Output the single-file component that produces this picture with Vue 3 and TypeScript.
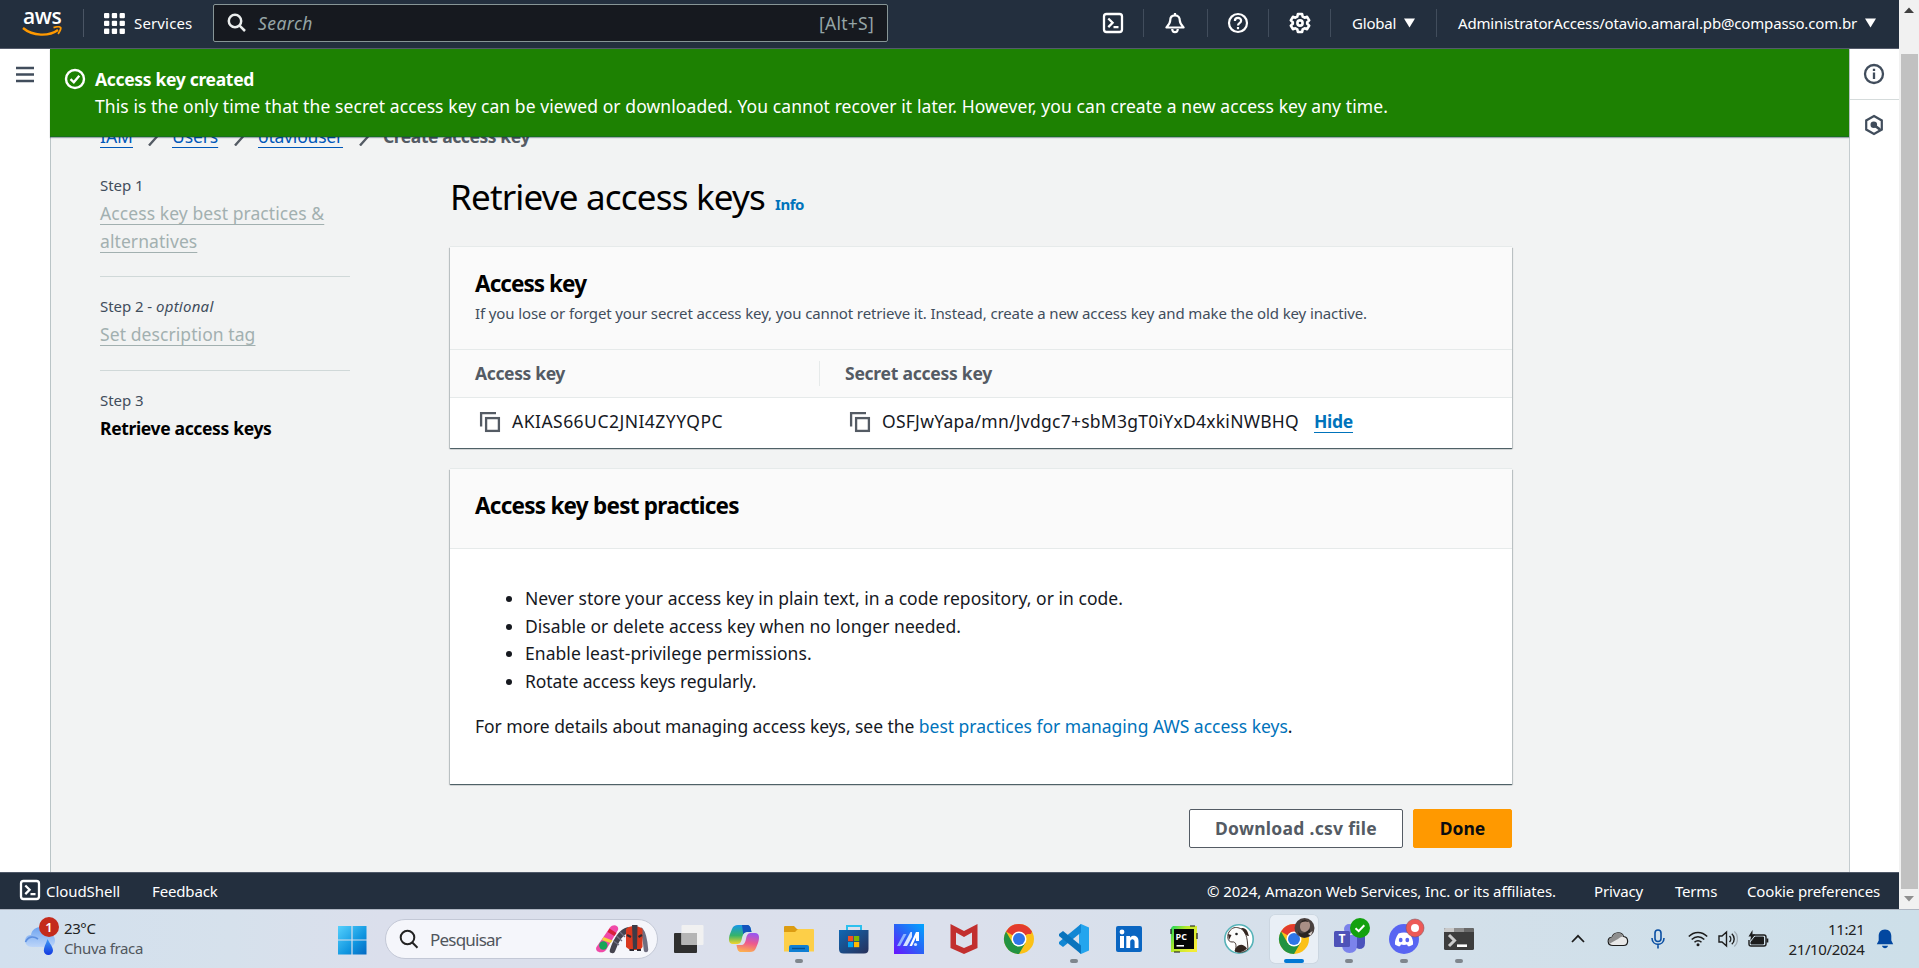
<script setup lang="ts">
interface Step {
  label: string
  optional?: boolean
  title: string
  current?: boolean
}

interface TaskApp {
  name: string
  running?: boolean
  active?: boolean
}

const steps: Step[] = [
  { label: 'Step 1', title: 'Access key best practices & alternatives' },
  { label: 'Step 2', optional: true, title: 'Set description tag' },
  { label: 'Step 3', title: 'Retrieve access keys', current: true },
]

const practices: string[] = [
  'Never store your access key in plain text, in a code repository, or in code.',
  'Disable or delete access key when no longer needed.',
  'Enable least-privilege permissions.',
  'Rotate access keys regularly.',
]

const apps: TaskApp[] = [
  { name: 'taskview' },
  { name: 'copilot' },
  { name: 'explorer', running: true },
  { name: 'store' },
  { name: 'myasus' },
  { name: 'mcafee' },
  { name: 'chrome' },
  { name: 'vscode', running: true },
  { name: 'linkedin' },
  { name: 'pycharm' },
  { name: 'dbeaver' },
  { name: 'chrome-profile', running: true, active: true },
  { name: 'teams', running: true },
  { name: 'discord', running: true },
  { name: 'terminal', running: true },
]
</script>

<template>
  <div class="screen">
    <div class="browser">
      <div class="page">
        <header class="topbar">
          <div class="aws">
            <span class="aws-word">aws</span>
            <svg width="42" height="11" viewBox="0 0 42 11">
              <path d="M1 2 C11 10.5 27 10.5 36 4" fill="none" stroke="#f90" stroke-width="2.4" />
              <path d="M31.500 1.700 C35 0.600 38 0.800 38.600 1.600 C39.200 2.500 38 5.600 36 7.800" fill="none" stroke="#f90" stroke-width="1.800" />
            </svg>
          </div>
          <span class="bar first"></span>
          <svg class="grid-icon" width="21" height="21" viewBox="0 0 21 21" fill="#fff">
            <template v-for="r in 3" :key="r">
              <rect v-for="c in 3" :key="c" :x="(c - 1) * 7.8" :y="(r - 1) * 7.8" width="5.3" height="5.3" rx="1" />
            </template>
          </svg>
          <span class="services">Services</span>
          <div class="search">
            <svg width="20" height="20" viewBox="0 0 20 20" fill="none" stroke="#eaeded" stroke-width="2.5">
              <circle cx="8" cy="8" r="6.2" />
              <path d="M12.6 12.6 L18 18" />
            </svg>
            <span class="placeholder">Search</span>
            <span class="shortcut">[Alt+S]</span>
          </div>
          <div class="cell shell">
            <svg width="22" height="22" viewBox="0 0 22 22" fill="none" stroke="#fff" stroke-width="2.3">
              <rect x="2" y="2" width="18" height="18" rx="2.5" />
              <path d="M6.3 6.5 L10.6 10.8 L6.3 15.1 M11.5 15.2 H16.5" />
            </svg>
          </div>
          <div class="cell bell">
            <svg width="22" height="22" viewBox="0 0 22 22" fill="none" stroke="#fff" stroke-width="2.2" stroke-linejoin="round">
              <path d="M11 3.3 C7.6 3.3 6.2 5.8 6.2 8.6 C6.2 11.5 4.6 13 2.4 15.5 H19.6 C17.4 13 15.8 11.5 15.8 8.6 C15.8 5.8 14.4 3.3 11 3.3 Z M11 1 V4" />
              <path d="M8.2 17 C8.4 21.3 13.6 21.3 13.8 17" />
            </svg>
          </div>
          <div class="cell help">
            <svg width="22" height="22" viewBox="0 0 22 22" fill="none" stroke="#fff" stroke-width="2.2">
              <circle cx="11" cy="11" r="9" />
              <path d="M7.9 8.9 C7.9 4.9 14.1 5 14.1 8.7 C14.1 11.2 11 11 11 13.4" />
              <path d="M11 15 V17.2" />
            </svg>
          </div>
          <div class="cell gear">
            <svg width="22" height="22" viewBox="0 0 22 22" fill="none" stroke="#fff" stroke-width="2.6" stroke-linejoin="round">
              <path d="M8.9 2 H13.1 L13.7 4.7 L15.6 5.7 L18.1 4.8 L20.2 8.4 L18.2 10.2 V11.8 L20.2 13.6 L18.1 17.2 L15.6 16.3 L13.7 17.3 L13.1 20 H8.9 L8.3 17.3 L6.4 16.3 L3.9 17.2 L1.8 13.6 L3.8 11.8 V10.2 L1.8 8.4 L3.9 4.8 L6.4 5.7 L8.3 4.7 Z" />
              <circle cx="11" cy="11" r="2.6" />
            </svg>
          </div>
          <div class="cell region">
            <span>Global</span>
            <svg width="11" height="10" viewBox="0 0 11 10"><path d="M0 0.5 H11 L5.5 9.5 Z" fill="#fff" /></svg>
          </div>
          <div class="cell account">
            <span>AdministratorAccess/otavio.amaral.pb@compasso.com.br</span>
            <svg width="11" height="10" viewBox="0 0 11 10"><path d="M0 0.5 H11 L5.5 9.5 Z" fill="#fff" /></svg>
          </div>
        </header>

        <div class="middle">
          <aside class="left-rail">
            <svg width="18" height="17" viewBox="0 0 18 17" stroke="#414d5c" stroke-width="2.4">
              <path d="M0 2 H18 M0 8.5 H18 M0 15 H18" />
            </svg>
          </aside>

          <main class="content">
            <section class="flash">
              <svg width="22" height="22" viewBox="0 0 22 22" fill="none" stroke="#fff" stroke-width="2.4">
                <circle cx="11" cy="11" r="9" />
                <path d="M6.5 11.2 L9.8 14.3 L15.3 7.8" />
              </svg>
              <div>
                <div class="flash-title">Access key created</div>
                <div class="flash-text">This is the only time that the secret access key can be viewed or downloaded. You cannot recover it later. However, you can create a new access key any time.</div>
              </div>
            </section>

            <nav class="crumbs">
              <a class="c-iam">IAM</a>
              <svg width="11" height="20" viewBox="0 0 11 20"><path d="M1 0.500 L9.500 10 L1 19.500" /></svg>
              <a class="c-users">Users</a>
              <svg width="11" height="20" viewBox="0 0 11 20"><path d="M1 0.500 L9.500 10 L1 19.500" /></svg>
              <a class="c-user">otaviouser</a>
              <svg width="11" height="20" viewBox="0 0 11 20"><path d="M1 0.500 L9.500 10 L1 19.500" /></svg>
              <b>Create access key</b>
            </nav>

            <div class="columns">
              <ol class="steps">
                <li v-for="s in steps" :key="s.label">
                  <div class="step-label">{{ s.label }}<template v-if="s.optional"> - <i>optional</i></template></div>
                  <div class="step-title"><b v-if="s.current">{{ s.title }}</b><a v-else>{{ s.title }}</a></div>
                </li>
              </ol>

              <div class="panel">
                <div class="heading">
                  <h1>Retrieve access keys</h1>
                  <a class="info">Info</a>
                </div>

                <section class="card keys">
                  <div class="card-head">
                    <h2 class="h-key">Access key</h2>
                    <p>If you lose or forget your secret access key, you cannot retrieve it. Instead, create a new access key and make the old key inactive.</p>
                  </div>
                  <div class="row head-row">
                    <div class="col-a"><span>Access key</span></div>
                    <div class="col-b">Secret access key</div>
                  </div>
                  <div class="row">
                    <div class="col-a">
                      <svg width="22" height="22" viewBox="0 0 22 22" fill="none" stroke="#545b64" stroke-width="2.3">
                        <path d="M2.1 15.5 V2.1 H17" /><rect x="7.1" y="7.1" width="12.8" height="12.8" />
                      </svg>
                      <span class="key-id">AKIAS66UC2JNI4ZYYQPC</span>
                    </div>
                    <div class="col-b">
                      <svg width="22" height="22" viewBox="0 0 22 22" fill="none" stroke="#545b64" stroke-width="2.3">
                        <path d="M2.1 15.5 V2.1 H17" /><rect x="7.1" y="7.1" width="12.8" height="12.8" />
                      </svg>
                      <span class="key-secret">OSFJwYapa/mn/Jvdgc7+sbM3gT0iYxD4xkiNWBHQ</span>
                      <a class="hide">Hide</a>
                    </div>
                  </div>
                </section>

                <section class="card best">
                  <div class="card-head"><h2>Access key best practices</h2></div>
                  <ul>
                    <li v-for="p in practices" :key="p">{{ p }}</li>
                  </ul>
                  <p class="more">For more details about managing access keys, see the <a>best practices for managing AWS access keys</a>.</p>
                </section>

                <div class="actions">
                  <button class="btn download">Download .csv file</button>
                  <button class="btn done">Done</button>
                </div>
              </div>
            </div>
          </main>

          <aside class="right-rail">
            <div class="tool">
              <svg width="22" height="22" viewBox="0 0 22 22" fill="none" stroke="#414d5c" stroke-width="2.3">
                <circle cx="11" cy="11" r="9" />
                <path d="M11 9.5 V16 M11 5.8 V8" />
              </svg>
            </div>
            <div class="tool">
              <svg width="22" height="22" viewBox="0 0 22 22" fill="none" stroke="#414d5c" stroke-width="2.2">
                <path d="M11 2 L18.8 6.5 V15.5 L11 20 L3.2 15.5 V6.5 Z" />
                <circle cx="10.8" cy="10.8" r="2.2" fill="#414d5c" />
                <path d="M11 11 L17 15.500" stroke-width="2.800" />
              </svg>
            </div>
          </aside>
        </div>

        <footer class="bottombar">
          <svg width="22" height="22" viewBox="0 0 22 22" fill="none" stroke="#fff" stroke-width="2.3">
            <rect x="2" y="2" width="18" height="18" rx="2.5" />
            <path d="M6.3 6.5 L10.6 10.8 L6.3 15.1 M11.5 15.2 H16.5" />
          </svg>
          <span class="f-shell">CloudShell</span>
          <span class="f-feedback">Feedback</span>
          <span class="f-copy">© 2024, Amazon Web Services, Inc. or its affiliates.</span>
          <span class="f-privacy">Privacy</span>
          <span class="f-terms">Terms</span>
          <span class="f-cookie">Cookie preferences</span>
        </footer>
      </div>

      <div class="scrollbar">
        <svg width="10" height="6" viewBox="0 0 10 6"><path d="M0 6 L5 0.5 L10 6 Z" fill="#404040" /></svg>
        <div class="thumb"></div>
        <svg width="10" height="6" viewBox="0 0 10 6"><path d="M0 0 L5 5.5 L10 0 Z" fill="#8f8f8f" /></svg>
      </div>
    </div>

    <div class="taskbar">
      <div class="weather">
        <svg width="38" height="42" viewBox="0 0 38 42">
          <defs>
            <linearGradient id="cloud" x1="0" y1="0" x2="0" y2="1">
              <stop offset="0" stop-color="#6fa4f0" /><stop offset="1" stop-color="#bcd5f9" />
            </linearGradient>
            <linearGradient id="drop" x1="0" y1="0" x2="0" y2="1">
              <stop offset="0" stop-color="#3f9bf5" /><stop offset="1" stop-color="#1238e0" />
            </linearGradient>
          </defs>
          <path d="M8 31 C-1 31 -1 19 7 19 C8 9 24 8 25 18 C33 18 33 31 25 31 Z" fill="url(#cloud)" />
          <path d="M1.5 26 C4 20 10 20 14 23" fill="none" stroke="#5d8fe0" stroke-width="1.6" />
          <path d="M23.5 23 C26 28 29 31 29 34.5 A4.6 4.6 0 0 1 19.8 34.5 C19.8 31 22 28 23.5 23 Z" fill="url(#drop)" />
          <circle cx="25" cy="11" r="10" fill="#c42b1c" />
          <text x="25" y="15.6" text-anchor="middle" class="badge-num">1</text>
        </svg>
        <div class="weather-text">
          <div class="temp">23°C</div>
          <div class="cond">Chuva fraca</div>
        </div>
      </div>

      <div class="start">
        <svg width="30" height="30" viewBox="0 0 30 30">
          <defs>
            <linearGradient id="win" x1="0" y1="0" x2="1" y2="1">
              <stop offset="0" stop-color="#55d0fd" /><stop offset="0.6" stop-color="#1096e0" /><stop offset="1" stop-color="#0469c2" />
            </linearGradient>
          </defs>
          <path d="M1 1 H14.4 V14.4 H1 Z M15.6 1 H29.500 V14.4 H15.6 Z M1 15.6 H14.4 V29.500 H1 Z M15.6 15.6 H29.500 V29.500 H15.6 Z" fill="url(#win)" />
        </svg>
      </div>

      <div class="task-search">
        <svg class="lens" width="20" height="20" viewBox="0 0 20 20" fill="none" stroke="#222" stroke-width="2">
          <circle cx="8.5" cy="8.5" r="6.8" />
          <path d="M13.3 13.5 L18.5 18.7" />
        </svg>
        <span>Pesquisar</span>
        <svg class="promo" width="54" height="32" viewBox="0 0 54 32">
          <path d="M1.500 24 L15 4.500 C18 0.500 24.500 2.500 23 7 L11 27 C8 31.500 -1 29 1.500 24 Z" fill="#f04aa8" />
          <path d="M14.500 5.500 L21.500 10 L19.400 13 L12.500 9 Z" fill="#d8213b" />
          <path d="M8.500 14 L17.500 17.500 L15.500 20 L7 17 Z" fill="#f7d33c" />
          <circle cx="8.300" cy="22.500" r="4.200" fill="#18a558" />
          <path d="M33 7 C26 9 21 17 17.500 27.500" fill="none" stroke="#45444f" stroke-width="5.500" stroke-linecap="round" />
          <path d="M25 9 L30 14 M21.500 13 L27 18 M18.500 18 L24 22" stroke="#6f6e80" stroke-width="1.400" />
          <path d="M46 7 C49.500 11 50.500 20 51 27" fill="none" stroke="#6f6e80" stroke-width="4.500" stroke-linecap="round" />
          <path d="M31 6 C35 2 43 2 47.500 6 L47.500 24 L45 27 H35 L31 24 Z" fill="#d9391f" />
          <path d="M37 2 H42.5 L42 26 H38 Z" fill="#3c3b47" />
          <path d="M32 12 L36 14 M43.5 14 L47 12 M34.500 27 H39 M42 27 H46" stroke="#2b2a33" stroke-width="2.200" />
        </svg>
      </div>

      <div class="apps">
        <div v-for="a in apps" :key="a.name" class="app" :class="{ active: a.active }">
          <svg v-if="a.name === 'taskview'" width="44" height="44" viewBox="0 0 44 44">
            <rect x="7" y="16" width="23" height="20" rx="1" fill="#2f2f2f" />
            <rect x="14.500" y="8" width="22" height="20" rx="1" fill="#f1f1f1" />
            <rect x="14.500" y="16" width="15.500" height="12" fill="#b5b5b5" />
          </svg>

          <svg v-else-if="a.name === 'copilot'" width="44" height="44" viewBox="0 0 44 44">
            <defs>
              <linearGradient id="cpA" x1="0" y1="0" x2="0" y2="1">
                <stop offset="0" stop-color="#1797e8" /><stop offset="0.55" stop-color="#35b36b" /><stop offset="1" stop-color="#f4d52a" />
              </linearGradient>
              <linearGradient id="cpB" x1="0.5" y1="0" x2="0.3" y2="1">
                <stop offset="0" stop-color="#9a55ee" /><stop offset="0.5" stop-color="#ee5a8c" /><stop offset="1" stop-color="#fdb24e" />
              </linearGradient>
            </defs>
            <path d="M16 8 H25 C28 8 28.500 10 29.500 15 H25 C22 15 21 17 20 21 C19 26 18 27 14 27 H11 C6 27 6.500 21 8 17 L10 12 C11.300 9 13 8 16 8 Z" fill="url(#cpA)" />
            <path d="M20 8 H25 C28 8 28.500 10 29.500 15 H25 C23 15 22 16 21.300 17.500 Z" fill="#1353bd" />
            <path d="M28 35 H19 C16 35 15.500 33 14.500 28 H19 C22 28 23 26 24 22 C25 17 26 16 30 16 H33 C38 16 37.500 22 36 26 L34 31 C32.700 34 31 35 28 35 Z" fill="url(#cpB)" />
          </svg>

          <svg v-else-if="a.name === 'explorer'" width="44" height="44" viewBox="0 0 44 44">
            <path d="M7 10 Q7 9 8 9 H17 L20 12 H36 V18 H7 Z" fill="#dc9c12" />
            <path d="M7 15 H18 L21 12 H36 Q37 12 37 13 V34.500 H7 Z" fill="#fdcf48" />
            <path d="M12 35 V30 Q12 28 14 28 H30 Q32 28 32 30 V35 Z" fill="#0f7fd4" />
            <path d="M15 31.500 H28" stroke="#07508f" stroke-width="1.400" />
          </svg>

          <svg v-else-if="a.name === 'store'" width="44" height="44" viewBox="0 0 44 44">
            <defs>
              <linearGradient id="st" x1="0" y1="0" x2="1" y2="1"><stop offset="0" stop-color="#1068b4" /><stop offset="1" stop-color="#27305a" /></linearGradient>
            </defs>
            <path d="M15 14 V9 H29 V14" fill="none" stroke="#2cc0ee" stroke-width="2" />
            <path d="M7 13 H36.500 V32 Q36.500 36.500 32 36.500 H11.500 Q7 36.500 7 32 Z" fill="url(#st)" />
            <rect x="16" y="19" width="5.200" height="5.200" fill="#f25022" /><rect x="22" y="19" width="5.200" height="5.200" fill="#7fba00" />
            <rect x="16" y="25" width="5.200" height="5.200" fill="#00a4ef" /><rect x="22" y="25" width="5.200" height="5.200" fill="#ffb900" />
          </svg>

          <svg v-else-if="a.name === 'myasus'" width="44" height="44" viewBox="0 0 44 44">
            <defs>
              <linearGradient id="ma" x1="0" y1="1" x2="1" y2="0"><stop offset="0" stop-color="#6a12ff" /><stop offset="0.500" stop-color="#2a62f6" /><stop offset="1" stop-color="#00a6ff" /></linearGradient>
            </defs>
            <rect x="7" y="7" width="30" height="30" fill="url(#ma)" />
            <path d="M10 29 L16.500 17 H19.500 L13 29 Z" fill="#8fb4ff" />
            <path d="M16 29 L23.500 15 H25 V20 L20 29 Z" fill="#d6e4ff" />
            <path d="M22.500 29 L29 15 H32 V24 H29 V20.500 L25 29 Z" fill="#fff" />
            <circle cx="28.500" cy="27.500" r="1.600" fill="#d6e4ff" />
          </svg>

          <svg v-else-if="a.name === 'mcafee'" width="44" height="44" viewBox="0 0 44 44">
            <path d="M8.500 7 L22 14 L35.500 7 V31 L22 37 L8.500 31 Z M14 15.500 V27.500 L22 31 L30 27.500 V15.500 L22 20 Z" fill="#c22f2e" fill-rule="evenodd" />
          </svg>

          <svg v-else-if="a.name === 'chrome' || a.name === 'chrome-profile'" width="44" height="44" viewBox="0 0 44 44">
            <circle cx="22" cy="22" r="15" fill="#fbc117" />
            <path d="M22 22 L9 14.500 A15 15 0 0 1 35 14.500 Z" fill="#e33b2e" />
            <path d="M22 14.500 H35 L34 17 H22 Z" fill="#e33b2e" />
            <path d="M9 14.500 A15 15 0 0 0 22 37 L28.500 25.700 L15.500 25.700 Z" fill="#229342" />
            <circle cx="22" cy="22" r="7.500" fill="#fff" />
            <circle cx="22" cy="22" r="6" fill="#2f76e8" />
            <g v-if="a.name === 'chrome-profile'">
              <circle cx="32.500" cy="11" r="10" fill="#4a413f" />
              <ellipse cx="33" cy="9" rx="5" ry="6" fill="#a98f86" transform="rotate(15 33 9)" />
              <path d="M26 14 Q29 20 38 12 L38 18 Q32 23 27 18 Z" fill="#2b2422" />
              <path d="M28 6 Q32 0 37 5 Q32 3.500 28 6 Z" fill="#2b2422" />
              <path d="M36 17 L40.500 14 L39 18.500 Z" fill="#d8cfca" />
            </g>
          </svg>

          <svg v-else-if="a.name === 'vscode'" width="44" height="44" viewBox="0 0 44 44">
            <path d="M29 7 L37 10.500 V33.500 L29 37 L27 35 V9 Z" fill="#24a5ee" />
            <path d="M29 7 L29 15.500 L11 30 L7 27 V25 Z" fill="#1287d4" />
            <path d="M29 37 V28.500 L11 14 L7 17 V19 Z" fill="#0a74bd" />
          </svg>

          <svg v-else-if="a.name === 'linkedin'" width="44" height="44" viewBox="0 0 44 44">
            <rect x="9" y="9" width="26" height="26" rx="2" fill="#0a66c2" />
            <circle cx="15" cy="15" r="2.400" fill="#fff" />
            <path d="M13 19 H17 V31 H13 Z M19.300 19 H23 V20.700 C25 17.700 31.500 18 31.500 24 V31 H27.600 V24.800 C27.600 21.300 23.200 21.400 23.200 24.800 V31 H19.300 Z" fill="#fff" />
          </svg>

          <svg v-else-if="a.name === 'pycharm'" width="44" height="44" viewBox="0 0 44 44">
            <defs>
              <linearGradient id="pc" x1="0" y1="0" x2="1" y2="0.600"><stop offset="0" stop-color="#1fd65f" /><stop offset="0.450" stop-color="#b4e82a" /><stop offset="1" stop-color="#f2ec35" /></linearGradient>
            </defs>
            <path d="M9 11 L11 9 H35 V35 H9 Z" fill="url(#pc)" />
            <path d="M9 17 V12 M35 16 V22 M12 35 H18 M28 9 H33" stroke="#111" stroke-width="1.200" />
            <rect x="12" y="12" width="20" height="20" fill="#050505" />
            <text x="13.500" y="22.500" class="pc-word">PC</text>
            <rect x="14.500" y="28" width="7.500" height="1.600" fill="#fff" />
          </svg>

          <svg v-else-if="a.name === 'dbeaver'" width="44" height="44" viewBox="0 0 44 44">
            <circle cx="22" cy="22" r="14.200" fill="#fff" stroke="#56b3b8" stroke-width="1.600" />
            <path d="M12 15 C15 10 19 10 22 11 C27 12 30 18 30.500 26 L31 32 C27 36 22 36 18 34 C20 29 19 24 15 25 C10 25 10 18 12 15 Z" fill="#fbfbfb" stroke="#33251f" stroke-width="0.900" />
            <path d="M18 34.500 C18 29 25 24 30 31.500 C26 35.500 22 35.800 18 34.500 Z M24 11 C30 10 31 16 32 19 C28 19 27 14 24 11 Z" fill="#33251f" />
            <circle cx="19.500" cy="17" r="1.300" fill="#222" /><path d="M11 17 L14.500 18 L12 23 Z" fill="#33251f" />
          </svg>

          <svg v-else-if="a.name === 'teams'" width="44" height="44" viewBox="0 0 44 44">
            <circle cx="31" cy="14" r="4" fill="#4b53bc" />
            <circle cx="22" cy="12" r="5" fill="#7b83eb" />
            <path d="M27 18 H38 V26 Q38 32 32 32 L27 30 Z" fill="#4b53bc" />
            <path d="M15 18 H30 V28 Q30 36 22.500 36 Q16 36 15 29 Z" fill="#7b83eb" />
            <rect x="7" y="14" width="16" height="16" rx="1.500" fill="#4e52b8" />
            <text x="15" y="26.200" text-anchor="middle" class="teams-word">T</text>
            <circle cx="33" cy="11" r="10" fill="#13a10e" />
            <path d="M28.500 11.200 L31.700 14.200 L37.300 8.200" fill="none" stroke="#fff" stroke-width="2" />
          </svg>

          <svg v-else-if="a.name === 'discord'" width="44" height="44" viewBox="0 0 44 44">
            <circle cx="22" cy="22" r="15" fill="#5865f2" />
            <path d="M16.500 16.500 C20 15.300 24 15.300 27.500 16.500 C30 20 31.500 24 31 27.500 C29 29 27 29.500 26 29.200 L25 27.500 C23 28 21 28 19 27.500 L18 29.200 C17 29.500 15 29 13 27.500 C12.500 24 14 20 16.500 16.500 Z" fill="#fff" />
            <ellipse cx="18.700" cy="23" rx="1.900" ry="2.200" fill="#5865f2" /><ellipse cx="25.300" cy="23" rx="1.900" ry="2.200" fill="#5865f2" />
            <circle cx="33" cy="11" r="9" fill="#ed5a57" stroke="#8a5660" stroke-width="0.600" />
            <circle cx="33" cy="11" r="4" fill="#fff" />
          </svg>

          <svg v-else width="44" height="44" viewBox="0 0 44 44">
            <path d="M7 12.500 Q7 11 8.500 11 H35.500 Q37 11 37 12.500 V31.500 Q37 33 35.500 33 H8.500 Q7 33 7 31.500 Z" fill="#3d3d3d" />
            <path d="M7 15 V12.500 Q7 11 8.500 11 H17 V15 Z" fill="#c9c9c9" />
            <path d="M17 11 H27 V15 H17 Z" fill="#8d8d8d" /><path d="M27 11 H35.500 Q37 11 37 12.500 V15 H27 Z" fill="#686868" />
            <path d="M12 18 L17.500 23.500 L12 29" fill="none" stroke="#ccc" stroke-width="3" />
            <path d="M20 28.700 H30" stroke="#fff" stroke-width="2.600" />
          </svg>
          <i v-if="a.running" class="pill"></i>
        </div>
      </div>

      <div class="tray">
        <svg class="t-chev" width="14" height="9" viewBox="0 0 14 9"><path d="M1 8 L7 1.800 L13 8" fill="none" stroke="#1c1c1c" stroke-width="1.700" /></svg>
        <svg class="t-cloud" width="22" height="16" viewBox="0 0 22 16">
          <path d="M6 14.500 C-0.500 14.500 0 6.500 5 6.300 C7 0.500 15 0.500 16.500 5.500 C22 6 22 14.500 16.500 14.500 Z" fill="#e8e8e8" stroke="#1c1c1c" stroke-width="1.200" />
          <path d="M5 6.300 C7 0.500 15 0.500 16.500 5.500 C13 5.500 12 8 10 8.500 L3 12.500 C0.500 10 2 6.500 5 6.300 Z" fill="#8e8e8e" />
        </svg>
        <svg class="t-mic" width="14" height="20" viewBox="0 0 14 20" fill="none" stroke="#0a4fa3" stroke-width="1.600">
          <rect x="4" y="1" width="6" height="11.500" rx="3" /><path d="M1 9 C1 17.500 13 17.500 13 9 M7 15.500 V19.500" />
        </svg>
        <svg class="t-wifi" width="20" height="16" viewBox="0 0 20 16" fill="none" stroke="#1c1c1c" stroke-width="1.500">
          <path d="M0.800 5.500 C6 0 14 0 19.200 5.500 M3.700 8.500 C7.500 4.700 12.500 4.700 16.300 8.500 M6.500 11.300 C8.500 9.300 11.500 9.300 13.500 11.300" />
          <circle cx="10" cy="13.700" r="1.500" fill="#1c1c1c" stroke="none" />
        </svg>
        <svg class="t-vol" width="20" height="18" viewBox="0 0 20 18" fill="none" stroke="#1c1c1c" stroke-width="1.400">
          <path d="M1 6 H4 L8.500 2 V16 L4 12 H1 Z M11.500 6 C13.200 7.700 13.200 10.300 11.500 12 M13.800 3.700 C17 6.500 17 11.500 13.800 14.300" />
          <path d="M16.300 1.500 C20.500 5 20.500 13 16.300 16.500" stroke="#a3adb5" />
        </svg>
        <svg class="t-bat" width="21" height="18" viewBox="0 0 21 18">
          <path d="M4.500 5 H16 Q18 5 18 7 V14 Q18 16 16 16 H3 Q1 16 1 14 V10" fill="none" stroke="#1c1c1c" stroke-width="1.400" />
          <path d="M7 7 H15.500 V14 H3 V12 Z" fill="#1c1c1c" stroke="#1c1c1c" />
          <path d="M18.500 8.500 H20.300 V12.500 H18.500 Z" fill="#1c1c1c" />
          <path d="M4.500 0 L0.500 6.500 H3 L2.200 11 L7.300 4.500 H4.500 Z" fill="#1c1c1c" />
        </svg>
        <div class="clock">
          <div>11:21</div>
          <div>21/10/2024</div>
        </div>
        <svg class="t-bell" width="18" height="20" viewBox="0 0 18 20" fill="#0247a0">
          <path d="M9 0.500 C4.500 0.500 2.700 3.800 2.700 7 V11.500 L0.800 15.300 H17.200 L15.300 11.500 V7 C15.300 3.800 13.500 0.500 9 0.500 Z" />
          <path d="M6 16.800 H12 C11.500 20 6.500 20 6 16.800 Z" />
        </svg>
      </div>
    </div>
  </div>
</template>

<style>
html, body { margin: 0; overflow: hidden; }
</style>

<style scoped>
.screen {
  width: 1919px;
  height: 968px;
  display: flex;
  flex-direction: column;
  overflow: hidden;
  font-family: "Noto Sans", "Open Sans", sans-serif;
  font-size: 17.5px;
  color: #16191f;
  white-space: nowrap;
}
svg { display: block; flex: none; }
h1, h2, p, ol, ul { margin: 0; padding: 0; }
.browser { height: 909px; display: flex; flex: none; }
.page { width: 1899px; display: flex; flex-direction: column; }

.topbar {
  box-sizing: border-box;
  height: 49px;
  background: #232f3e;
  border-bottom: 1px solid #545b6b;
  display: flex;
  align-items: center;
  color: #fff;
  font-size: 15px;
  padding-bottom: 2px;
}
.aws { margin-left: 22px; width: 42px; height: 44px; }
.aws-word {
  display: block;
  height: 25px;
  padding: 0 0 0 1px;
  font: 600 21px/30px "Open Sans", "Noto Sans", sans-serif;
  letter-spacing: -0.4px;
}
.bar.first { width: 1px; height: 28px; background: #4a5564; margin-left: 19px; }
.grid-icon { margin-left: 20px; }
.services { margin-left: 9px; width: 59px; letter-spacing: 0.15px; }
.search {
  box-sizing: border-box;
  margin-left: 20px;
  width: 675px;
  height: 38px;
  border: 1px solid #879596;
  border-radius: 2px;
  background: #16191f;
  display: flex;
  align-items: center;
  padding: 0 13px 0 13px;
  font-size: 17.5px;
  color: #95a5a6;
}
.placeholder { font-style: italic; margin-left: 11px; letter-spacing: 0.45px; }
.shortcut { margin-left: auto; letter-spacing: 0.26px; }
.cell {
  box-sizing: border-box;
  height: 28px;
  border-right: 1px solid #414d5c;
  display: flex;
  align-items: center;
  justify-content: center;
}
.cell.shell { width: 62px; margin-left: 194px; }
.cell.bell { width: 64px; padding-right: 1px; }
.cell.help { width: 61px; }
.cell.gear { width: 62px; }
.cell.region { width: 106px; justify-content: flex-start; padding-left: 21px; letter-spacing: -0.2px; gap: 8px; }
.cell.account { flex: 1; justify-content: flex-start; padding-left: 21px; border-right: 0; letter-spacing: -0.163px; gap: 8px; }

.middle { display: flex; height: 823px; }
.left-rail { width: 50px; background: #fff; }
.left-rail svg { margin: 17px 0 0 16px; }
.content {
  box-sizing: border-box;
  width: 1799px;
  background: #f2f3f3;
  border-left: 1px solid #bac4c6;
}
.flash {
  position: relative;
  z-index: 1;
  box-sizing: border-box;
  height: 88px;
  margin-left: -1px;
  background: #1d8102;
  border-bottom: 1px solid #16701c;
  box-shadow: 0 1px 1px rgba(0, 28, 36, 0.35);
  color: #fff;
  display: flex;
  gap: 9px;
  padding: 16px 0 0 14px;
}
.flash svg { margin-top: 3px; }
.flash-title { font-weight: 700; line-height: 28px; letter-spacing: -0.32px; }
.flash-text { line-height: 27px; letter-spacing: 0.084px; }

.crumbs {
  display: flex;
  align-items: center;
  height: 28px;
  line-height: 28px;
  margin: -15px 0 0 49px;
}
.crumbs a {
  color: #0057b8;
  text-decoration: underline;
  text-underline-offset: 4px;
  text-decoration-thickness: 1px;
  text-decoration-skip-ink: none;
}
.crumbs svg { fill: none; stroke: #545b64; stroke-width: 2.4; }
.crumbs .c-iam { width: 32px; margin-right: 16px; }
.crumbs .c-users { width: 46px; margin: 0 16px 0 13px; letter-spacing: -0.1px; }
.crumbs .c-user { width: 85px; margin: 0 16px 0 13px; letter-spacing: -0.2px; }
.crumbs b { color: #545b64; margin-left: 13px; letter-spacing: -0.43px; }

.columns { display: flex; padding-left: 49px; gap: 100px; }
.steps { list-style: none; width: 250px; padding-top: 23px; white-space: normal; }
.steps li { padding-bottom: 21px; }
.steps li + li { border-top: 1px solid #d0d8d8; padding-top: 17px; padding-bottom: 22px; }
.step-label { font-size: 15px; line-height: 24px; margin-bottom: 2px; color: #414d5c; letter-spacing: -0.05px; }
.step-label i { letter-spacing: 0.25px; }
.step-title { line-height: 28px; letter-spacing: 0.08px; }
.step-title a {
  color: #a2b0b0;
  text-decoration: underline;
  text-underline-offset: 4px;
  text-decoration-thickness: 1px;
  text-decoration-skip-ink: none;
}
.step-title b { color: #000; letter-spacing: -0.35px; }

.panel { width: 1062px; padding-top: 25px; }
.heading { display: flex; align-items: baseline; height: 44px; margin-bottom: 28px; gap: 10px; }
h1 { font-size: 35px; font-weight: 400; line-height: 44px; letter-spacing: -0.81px; color: #000; }
.info { font-size: 15px; font-weight: 700; color: #0073bb; letter-spacing: -0.5px; }
.card {
  background: #fff;
  box-shadow: 0 1px 1px rgba(0, 28, 36, 0.55), 1px 1px 1px rgba(0, 28, 36, 0.15), -1px 1px 1px rgba(0, 28, 36, 0.15), 0 -1px 0 #e6eaea;
}
.card-head { box-sizing: border-box; background: #fafafa; border-bottom: 1px solid #e6eaea; padding: 23px 25px 0; }
.keys .card-head { height: 103px; }
h2 { font-size: 22.5px; font-weight: 700; line-height: 28px; letter-spacing: -0.75px; color: #000; }
.h-key { letter-spacing: -0.94px; }
.card-head p { margin-top: 3px; font-size: 15px; line-height: 24px; color: #414d5c; letter-spacing: -0.12px; }
.row { display: flex; height: 50px; align-items: center; }
.row > div { padding-bottom: 4px; display: flex; align-items: center; }
.head-row { height: 47px; background: #fafafa; border-bottom: 1px solid #e6eaea; font-weight: 700; color: #545b64; }
.head-row > div { padding-bottom: 1px; }
.col-a { box-sizing: border-box; width: 370px; padding-left: 25px; }
.head-row .col-a { border-right: 1px solid #e6eaea; letter-spacing: -0.368px; height: 25px; }
.head-row .col-b { letter-spacing: -0.25px; }
.col-b { padding-left: 25px; }
.row svg { margin: 2px 11px 0 4px; }
.key-id { letter-spacing: 0.479px; }
.key-secret { letter-spacing: 0.254px; width: 417px; }
.hide {
  margin-left: 15px;
  font-weight: 700;
  color: #0073bb;
  letter-spacing: -0.28px;
  text-decoration: underline;
  text-underline-offset: 4px;
  text-decoration-thickness: 1px;
}
.best { margin-top: 21px; height: 315px; }
.best .card-head { height: 80px; }
.best ul { padding: 36px 0 0 75px; line-height: 27.5px; letter-spacing: 0.036px; }
.best li:nth-child(3) { letter-spacing: 0.06px; }
.best li:last-child { letter-spacing: -0.1px; }
.more { padding: 17px 25px 0; line-height: 28px; letter-spacing: -0.06px; }
.more a { color: #0073bb; letter-spacing: -0.006px; }
.actions { display: flex; justify-content: flex-end; gap: 10px; margin-top: 25px; }
.btn {
  box-sizing: border-box;
  height: 39px;
  border-radius: 2px;
  font: 700 17.5px "Noto Sans", "Open Sans", sans-serif;
  padding: 0 0 2px;
}
.download { width: 214px; background: #fff; border: 1px solid #545b64; color: #545b64; letter-spacing: 0.28px; }
.done { width: 99px; background: #f90; border: 1px solid #f90; color: #0a0c10; }

.right-rail { box-sizing: border-box; width: 50px; background: #fff; border-left: 1px solid #c5cccf; }
.tool { box-sizing: border-box; height: 51px; border-bottom: 1px solid #d5dbdb; display: flex; align-items: center; justify-content: center; padding-right: 1px; }
.tool + .tool { border-bottom: 0; height: 50px; }

.bottombar {
  box-sizing: border-box;
  height: 37px;
  background: #232f3e;
  border-top: 1px solid #4e5868;
  display: flex;
  align-items: center;
  color: #fff;
  font-size: 15px;
  padding-left: 19px;
}
.bottombar svg { margin-top: -2px; }
.f-shell { margin-left: 5px; width: 74px; letter-spacing: -0.063px; }
.f-feedback { margin-left: 32px; letter-spacing: -0.15px; }
.f-copy { margin-left: auto; width: 349px; letter-spacing: -0.08px; }
.f-privacy { margin-left: 38px; width: 50px; letter-spacing: -0.15px; }
.f-terms { margin-left: 31px; width: 42px; letter-spacing: -0.2px; }
.f-cookie { margin-left: 30px; width: 133px; margin-right: 19px; letter-spacing: -0.141px; }

.scrollbar { box-sizing: border-box; width: 20px; background: #f1f1f1; display: flex; flex-direction: column; align-items: center; padding: 7px 0; }
.thumb { width: 17px; height: 835px; margin: 41px 0 7px; background: #c1c1c1; }

.taskbar {
  box-sizing: border-box;
  height: 59px;
  border-top: 1px solid #aeb6c2;
  background: linear-gradient(90deg, #d2e0ee 0%, #d6e1ec 12%, #dbdfec 20%, #dbe0ec 50%, #d3e0ea 75%, #cddfe9 100%);
  display: flex;
  color: #222;
  font-size: 15px;
}
.weather { width: 324.5px; display: flex; }
.weather svg { margin: 6px 0 0 24px; }
.weather-text { margin: 8px 0 0 2px; line-height: 20px; letter-spacing: -0.4px; }
.badge-num { font: 600 13px "Noto Sans", sans-serif; fill: #fff; }
.cond { color: #51575d; letter-spacing: -0.367px; }
.start { width: 55px; display: flex; justify-content: center; padding-top: 15px; }
.task-search {
  box-sizing: border-box;
  margin: 9px 3.5px 0 5.5px;
  width: 273px;
  height: 40px;
  border-radius: 20px;
  background: #f5f6fb;
  border: 1px solid #c3c8d6;
  display: flex;
  align-items: center;
  padding: 0 8px 0 13px;
  font-size: 17px;
  color: #50555c;
}
.task-search span { margin-left: 11px; letter-spacing: -0.785px; }
.promo { margin-left: auto; }
.apps { display: flex; }
.app { position: relative; width: 55px; display: flex; justify-content: center; padding-top: 7px; }
.app svg { position: relative; }
.app.active::before {
  content: "";
  position: absolute;
  left: 3.5px;
  top: 5px;
  width: 48px;
  height: 48px;
  border-radius: 5px;
  background: #e9eff6;
  box-shadow: 0 0 0 0.6px #c5cfda;
}
.pill { position: absolute; left: 23.5px; top: 49px; width: 8px; height: 4px; border-radius: 2px; background: #7f868d; }
.active .pill { left: 17.5px; width: 20px; background: #0078d4; }
.pc-word { font: 700 9px "Open Sans", sans-serif; fill: #fff; }
.teams-word { font: 700 12px "Open Sans", sans-serif; fill: #fff; }

.tray { display: flex; align-items: center; margin-left: 84px; padding-bottom: 1px; }
.t-cloud { margin-left: 22px; }
.t-mic { margin-left: 22px; }
.t-wifi { margin-left: 23px; }
.t-vol { margin-left: 10px; }
.t-bat { margin-left: 10px; }
.clock { width: 77px; margin-left: 19px; text-align: right; line-height: 20px; letter-spacing: -0.38px; }
.t-bell { margin-left: 11px; }
</style>
